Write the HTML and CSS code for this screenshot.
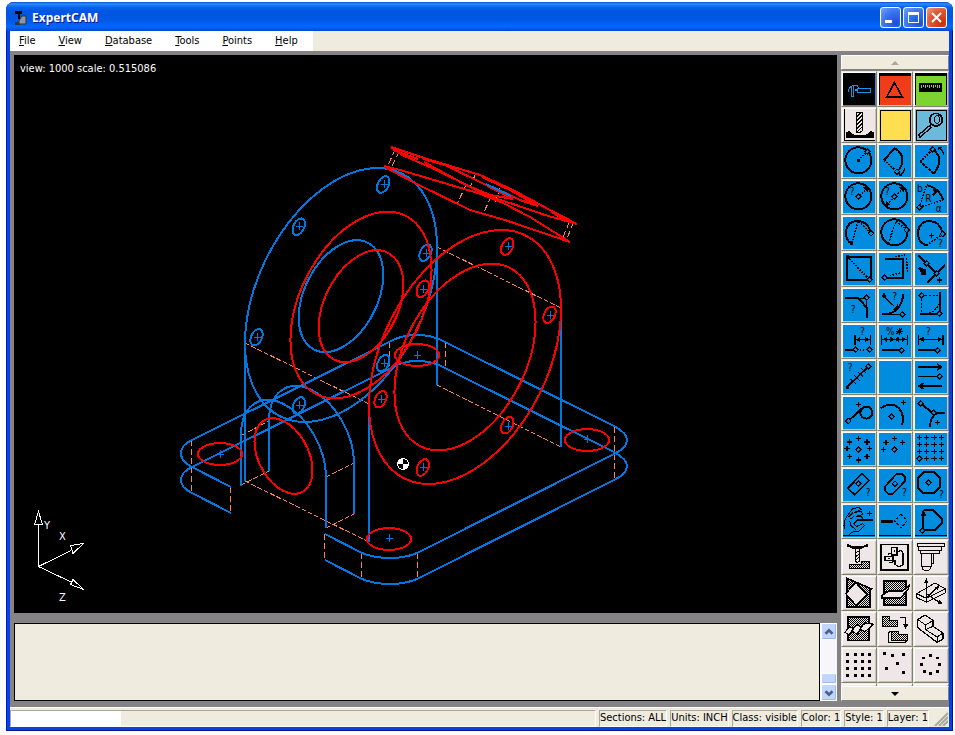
FILE: index.html
```html
<!DOCTYPE html>
<html lang="en">
<head>
    <meta charset="UTF-8">
    <meta name="viewport" content="width=device-width, initial-scale=1.0">
    <title>ExpertCAM</title>
    <link rel="stylesheet" href="styles.css">
</head>
<body>
    <!-- shared icon parts -->
    <svg class="defs" aria-hidden="true">
        <defs>
            <path id="dm" d="M0-8L8 0L0 8L-8 0Z" fill="#008de0" stroke="#000" stroke-width="4"/>
            <path id="pl" d="M-8 0H8M0-8V8" stroke="#000" stroke-width="4"/>
            <path id="cross" d="M-3 .5H4M.5-4V4"/>
            <pattern id="hatch" width="6" height="6" patternUnits="userSpaceOnUse">
                <rect width="6" height="6" fill="#efe7e7"/>
                <path d="M0 0H3V3H0ZM3 3H6V6H3Z" fill="#000"/>
            </pattern>
        </defs>
    </svg>
    <div class="window">
        <div class="titlebar">
            <svg class="app-icon" viewBox="0 0 16 16">
                <path d="M1 1H8V4H6V9H4V4H1Z" fill="#000"/>
                <path d="M1 12H6V15H1Z" fill="#333"/>
                <path d="M6 9L8 6H12V14H5V11Z" fill="#8c96a5" stroke="#333" stroke-width="1"/>
            </svg>
            <h1>ExpertCAM</h1>
            <button class="win-button" aria-label="Minimize"><svg viewBox="0 0 19 19"><path d="M4 13.5H11" stroke-width="3"/></svg></button>
            <button class="win-button" aria-label="Maximize"><svg viewBox="0 0 19 19"><path d="M4 5.5H15" stroke-width="3"/><path d="M4.5 5V14.500H14.5V5" stroke-width="1"/></svg></button>
            <button class="win-button close" aria-label="Close"><svg viewBox="0 0 19 19"><path d="M5 5L14 14M14 5L5 14" stroke-width="2"/></svg></button>
        </div>
        <div class="menubar">
            <div class="menu">
                <button><u>F</u>ile</button>
                <button><u>V</u>iew</button>
                <button><u>D</u>atabase</button>
                <button><u>T</u>ools</button>
                <button><u>P</u>oints</button>
                <button><u>H</u>elp</button>
            </div>
        </div>
        <div class="client">
            <div class="work">
                <div class="viewport">
                    <svg viewBox="14 55 823 558" preserveAspectRatio="xMinYMin meet">
                        <text x="20" y="72" class="view-label">view: 1000 scale: 0.515086</text>
                        <!-- construction edges -->
                        <g class="dash">
                            <path d="M245 343L369 404M245 481L369 542M437 247L561 308M437 385L561 447"/>
                            <path d="M242 435L269 421M241 485L269 471M326 477L354 463M326 528L354 514"/>
                        </g>
                        <g class="dash long">
                            <path d="M191.5 440V493M230.5 487V513M324.5 534V560M361.5 553V579M417.5 553V579M614.5 427V479M389.5 342V368M445.5 342V368"/>
                            <path d="M395 150L388 165M399 152L392 166M466 185L457 204M475 175L470 188M491 197L483 214M500 188L495 203M569 223L563 237M573 223L567 239"/>
                        </g>
                        <!-- base plate -->
                        <g class="blue">
                            <path d="M231 487L190 466Q181 461 181 453Q181 445 192 440L389 342Q401 335 417 335Q433 335 445 342L614 426Q627 433 627 440Q627 448 614 454L417 553Q405 558 390 558Q374 558 362 553L325 534"/>
                            <path d="M231 513L192 493Q181 488 181 480Q181 472 192 467L389 369Q402 361 417 361Q433 361 445 368L614 452Q627 459 627 466Q627 474 614 480L417 579Q405 584 390 584Q374 584 362 579L325 560"/>
                            <path d="M245 343V481M369 404V542M437 240V385M561 308V447"/>
                            <path d="M241 435V486M269 420V471M326 477V528M354 462V514"/>
                            <path transform="matrix(.425 .21 0 .52 283.5 456)" d="M-100 0A100 100 0 0 1 100 0"/>
                            <path transform="matrix(.425 .21 0 .52 311.5 442)" d="M-100 0A100 100 0 0 1 100 0"/>
                        </g>
                        <!-- rear flange -->
                        <g class="blue" transform="matrix(.96 -.48 0 1.176 341 295)">
                            <circle r="100"/>
                            <circle cy="1" r="44"/>
                            <circle cx="88" r="6.5"/>
                            <circle cx="44" cy="-76" r="6.5"/>
                            <circle cx="-44" cy="-76" r="6.5"/>
                            <circle cx="-88" r="6.5"/>
                            <circle cx="-44" cy="76" r="6.5"/>
                            <circle cx="44" cy="76" r="6.5"/>
                        </g>
                        <g class="red" transform="matrix(.96 -.48 0 1.176 361 305)">
                            <circle r="73.5"/>
                            <circle cy="1" r="44"/>
                        </g>
                        <!-- front flange -->
                        <g class="red" transform="matrix(.96 -.48 0 1.176 465 357)">
                            <circle r="100"/>
                            <circle r="73.5"/>
                            <circle cx="88" r="6.5"/>
                            <circle cx="44" cy="-76" r="6.5"/>
                            <circle cx="-44" cy="-76" r="6.5"/>
                            <circle cx="-88" r="6.5"/>
                            <circle cx="-44" cy="76" r="6.5"/>
                            <circle cx="44" cy="76" r="6.5"/>
                        </g>
                        <g class="red">
                            <circle transform="matrix(.29 .144 0 .35 283.5 456)" r="100"/>
                            <ellipse cx="220" cy="454" rx="22" ry="11"/>
                            <ellipse cx="417" cy="355" rx="22" ry="11"/>
                            <ellipse cx="587" cy="440" rx="22" ry="11"/>
                            <ellipse cx="389" cy="539" rx="22" ry="11"/>
                        </g>
                        <!-- tilted disc -->
                        <g class="red">
                            <path d="M391 147L424 158L480 175L513 190L550 210L577 224L545 215L513 204L488 196L465 184L432 168L402 155Z"/>
                            <path d="M423 159L445 165L478 181L513 199L490 195L466 185L424 162"/>
                            <path d="M482 177L510 190L538 206L520 200L497 189"/>
                            <path d="M393 150L418 159M551 212L568 221"/>
                            <path d="M384 166L400 170L478 193L503 203L530 217L570 242L505 220L470 210L419 185L390 170Z"/>
                        </g>
                        <path class="blue" d="M486 184L511 196"/>
                        <g class="centers">
                            <use href="#cross" x="384" y="184"/><use href="#cross" x="299" y="226"/><use href="#cross" x="257" y="337"/>
                            <use href="#cross" x="299" y="405"/><use href="#cross" x="384" y="363"/><use href="#cross" x="426" y="253"/>
                            <use href="#cross" x="508" y="246"/><use href="#cross" x="423" y="289"/><use href="#cross" x="381" y="399"/>
                            <use href="#cross" x="423" y="467"/><use href="#cross" x="508" y="426"/><use href="#cross" x="550" y="315"/>
                            <use href="#cross" x="220" y="454"/><use href="#cross" x="417" y="355"/><use href="#cross" x="587" y="439"/><use href="#cross" x="389" y="538"/>
                        </g>
                        <!-- origin marker -->
                        <circle cx="403" cy="464" r="6" fill="#fff"/>
                        <path d="M403 464V459A5 5 0 0 1 408 464ZM403 464V469A5 5 0 0 1 398 464Z" fill="#000"/>
                        <!-- axes -->
                        <g class="axes">
                            <path d="M38.5 524V566.500L71 550.500M38.5 566.500L71 582"/>
                            <path d="M34.5 524.500H42.5L38.5 511.500ZM70.5 545.500L83.5 543.500L73 553.500ZM73 579.500L83.5 589.500L70.5 584.500Z"/>
                        </g>
                        <g class="axis-names">
                            <text x="44" y="529">Y</text>
                            <text x="59" y="540">X</text>
                            <text x="59" y="601">Z</text>
                        </g>
                    </svg>
                </div>
                <div class="console">
                    <textarea aria-label="Messages" readonly></textarea>
                    <div class="scrollbar">
                        <button aria-label="Scroll up"><svg viewBox="0 0 16 16"><path d="M4 10L8 6L12 10"/></svg></button>
                        <div class="track"><div class="thumb"></div></div>
                        <button aria-label="Scroll down"><svg viewBox="0 0 16 16"><path d="M4 6L8 10L12 6"/></svg></button>
                    </div>
                </div>
            </div>
            <div class="toolbar">
                <button class="pager" aria-label="Previous tools"><svg viewBox="0 0 8 4"><path d="M0 4L4 0L8 4Z" fill="#aca899"/></svg></button>
                <div class="tools">
                    <button class="black"><svg viewBox="0 0 99 99"><path d="M18 56L17 49L24 40L32 37H42L46 44M31 37V69H24V42M36 48H44V45H82V57H44V53H36" stroke="#1a94e6" stroke-width="3"/><path d="M97 0V97H0" stroke="#1a94e6" stroke-width="3"/></svg></button>
                    <button class="black"><svg viewBox="0 0 99 99"><path d="M3 8H95V96H3Z" fill="#f03c18" stroke="none"/><path d="M46 29L70 72H23Z" stroke-width="5"/></svg></button>
                    <button class="black"><svg viewBox="0 0 99 99"><path d="M3 8H92V99H3Z" fill="#7bd42f" stroke="none"/><path d="M12 29H81V58H12Z" class="solid"/><path d="M19 35V46M25 35V42M31 35V46M37 35V42M43 35V46M49 35V42M55 35V46M61 35V42M67 35V46M73 35V46" stroke="#7bd42f" stroke-width="3"/></svg></button>

                    <button class="pale"><svg viewBox="0 0 99 99"><path class="thin" d="M5 0V94H96"/><path class="thin" d="M39 9H57V66L50 71H39ZM39 25L54 10M39 37L57 19M39 49L57 31M39 61L57 43M41 70L57 55"/><path class="solid" d="M10 69L20 66Q24 76 36 77H66Q78 76 82 66L92 69V86H10Z"/></svg></button>
                    <button class="yellow"><svg viewBox="0 0 99 99"><path class="thin" d="M4 3H94V94H4Z"/></svg></button>
                    <button class="sky"><svg viewBox="0 0 99 99"><path class="thin" d="M4 3H94V94H4Z"/><circle cx="63" cy="32" r="19" stroke-width="5"/><ellipse class="thin" cx="66" cy="31" rx="7" ry="12"/><path d="M49 45L42 51M42 51L11 78L15 85L48 56Z" stroke-width="4"/></svg></button>

                    <button><svg viewBox="0 0 99 99"><circle cx="46" cy="46" r="39"/><path class="dot" d="M46 46L73 20"/><circle class="solid" cx="46" cy="46" r="5"/><use href="#dm" x="73" y="20"/></svg></button>
                    <button><svg viewBox="0 0 99 99"><path d="M15 45L47 10Q70 22 70 45Q70 65 56 78"/><path class="dot" d="M15 45L54 80"/><use href="#dm" x="54" y="80"/><path d="M63 91Q76 82 77 69M62 84V92H70" stroke-width="4"/></svg></button>
                    <button><svg viewBox="0 0 99 99"><path d="M53 13Q74 28 73 47Q72 68 56 85"/><path d="M56 85L16 50" stroke-dasharray="9 3"/><path class="dot" d="M16 50L53 13"/><use href="#dm" x="53" y="13"/><path d="M72 9Q84 14 86 29M70 14L72 7H80" stroke-width="4"/></svg></button>

                    <button><svg viewBox="0 0 99 99"><circle cx="46" cy="46" r="39"/><text x="20" y="43">?</text><path class="dot" d="M50 44L70 24"/><path class="solid" d="M74 18V33L60 19Z"/><use href="#dm" x="46" y="47"/></svg></button>
                    <button><svg viewBox="0 0 99 99"><circle cx="46" cy="46" r="39"/><text x="18" y="43">?</text><path class="dot" d="M24 70L70 24"/><path class="solid" d="M74 18V33L60 19ZM20 74V59L34 73Z"/><use href="#dm" x="46" y="47"/></svg></button>
                    <button><svg viewBox="0 0 99 99"><path d="M35 12Q72 20 85 57"/><path class="dot" d="M13 79L35 12M13 79L85 57"/><path class="solid" d="M66 24V38L52 26Z"/><path d="M52 43L61 34"/><text x="6" y="32">b</text><text x="31" y="64">R</text><text x="62" y="93">α</text><use href="#dm" x="13" y="79"/></svg></button>

                    <button><svg viewBox="0 0 99 99"><path d="M26 79C12 74 7 56 9 42C12 23 26 12 46 12C64 12 76 22 84 46"/><path class="dot" d="M26 79L46 12L84 49"/><path class="solid" d="M21 72H31V84H21Z"/><use href="#dm" x="84" y="49"/></svg></button>
                    <button><svg viewBox="0 0 99 99"><circle cx="46" cy="46" r="39"/><path class="dot" d="M28 79L51 12L83 39"/><use href="#dm" x="83" y="39"/></svg></button>
                    <button><svg viewBox="0 0 99 99"><path d="M35 85C12 78 7 58 9 42C12 23 26 11 45 12C64 13 76 24 83 46"/><path class="dot" d="M35 85L83 51"/><use href="#dm" x="83" y="51"/><use href="#pl" x="49" y="56"/><text x="69" y="90">?</text></svg></button>

                    <button><svg viewBox="0 0 99 99"><path d="M12 11H83V81H12Z"/><path class="dot" d="M12 11L80 80"/><path class="solid" d="M8 7H18V17H8Z"/><use href="#dm" x="80" y="80"/></svg></button>
                    <button><svg viewBox="0 0 99 99"><path d="M18 18H72V74H20"/><path class="dot" d="M48 11L78 6M82 16L86 60M32 68L66 60" stroke-dasharray="8 6"/><use href="#dm" x="17" y="74"/></svg></button>
                    <button><svg viewBox="0 0 99 99"><path d="M10 7L65 61M37 88L90 36"/><path class="solid" d="M12 40L22 45L30 50L34 46V67H15L20 60L10 48Z"/><use href="#dm" x="35" y="31"/><use href="#dm" x="65" y="61"/><use href="#pl" x="73" y="81"/></svg></button>

                    <button><svg viewBox="0 0 99 99"><path d="M6 27H46L71 56V88"/><path class="thin" d="M46 27H71V56"/><use href="#dm" x="71" y="26"/><text x="23" y="73">?</text></svg></button>
                    <button><svg viewBox="0 0 99 99"><path d="M10 75Q66 78 73 14"/><path class="thin" d="M10 75H70"/><path d="M17 24L46 52" stroke-width="4"/><path class="solid" d="M58 63H40L56 46Z"/><path d="M8 20H22M15 13V27" stroke-width="5"/><text x="40" y="34">?</text><use href="#dm" x="70" y="76"/></svg></button>
                    <button><svg viewBox="0 0 99 99"><path d="M75 10V75H15"/><path class="thin" d="M20 19V72M20 19H75" stroke-dasharray="6 5"/><path class="dot" d="M35 75Q68 66 75 36"/><use href="#dm" x="20" y="19"/><use href="#dm" x="73" y="74"/></svg></button>

                    <button><svg viewBox="0 0 99 99"><text x="51" y="31">?</text><path d="M36 30V59M82 30V59" stroke-width="4"/><path class="thin" d="M36 44H82"/><path class="solid" d="M38 44L52 36V52ZM80 44L66 36V52Z"/><path d="M6 74H32"/><path class="dot" d="M50 74H70"/><use href="#dm" x="38" y="74"/><use href="#dm" x="80" y="74"/></svg></button>
                    <button><svg viewBox="0 0 99 99"><text x="21" y="31">%</text><path d="M50 19H72M61 8V30M53 11L69 27M69 11L53 27" stroke-width="3"/><path d="M8 30V60M85 30V60" stroke-width="4"/><path class="thin" d="M8 43H85"/><path class="solid" d="M11 43L25 35V51ZM82 43L68 35V51ZM46 43L34 35V51ZM47 43L59 35V51Z"/><path d="M10 76H62"/><use href="#dm" x="68" y="76"/></svg></button>
                    <button><svg viewBox="0 0 99 99"><text x="33" y="31">?</text><path d="M10 30V60M84 30V60" stroke-width="4"/><path class="thin" d="M10 43H84"/><path class="solid" d="M12 43L26 35V51ZM82 43L68 35V51Z"/><path d="M10 76H62"/><use href="#dm" x="68" y="76"/></svg></button>

                    <button><svg viewBox="0 0 99 99"><path d="M12 79L72 20"/><path class="thin" d="M22 54L39 69M33 43L50 58M44 32L61 47M55 22L70 37"/><path class="solid" d="M8 75H18V84H8Z"/><use href="#dm" x="76" y="16"/><text x="14" y="29">?</text></svg></button>
                    <button aria-label="Blank"><svg viewBox="0 0 99 99"></svg></button>
                    <button><svg viewBox="0 0 99 99"><path d="M10 18H78M66 9L79 18L66 27M10 46H68M82 75H13M25 66L12 75L25 84" stroke-width="5"/><use href="#dm" x="74" y="46"/></svg></button>

                    <button><svg viewBox="0 0 99 99"><path d="M18 70L55 36"/><circle cx="70" cy="47" r="18"/><use href="#dm" x="16" y="72"/><use href="#pl" x="46" y="22"/></svg></button>
                    <button><svg viewBox="0 0 99 99"><path d="M6 34Q22 20 45 24Q78 38 70 83"/><use href="#dm" x="38" y="59"/><use href="#pl" x="73" y="16"/></svg></button>
                    <button><svg viewBox="0 0 99 99"><path d="M17 19L55 50M90 48H66Q46 58 45 90"/><use href="#dm" x="17" y="19"/><use href="#dm" x="56" y="47"/><use href="#pl" x="67" y="76"/></svg></button>

                    <button><svg viewBox="0 0 99 99"><use href="#dm" x="46" y="50"/><use href="#pl" x="46" y="16"/><use href="#pl" x="20" y="27"/><use href="#pl" x="72" y="27"/><use href="#pl" x="12" y="47"/><use href="#pl" x="80" y="47"/><use href="#pl" x="20" y="70"/><use href="#pl" x="72" y="70"/><use href="#pl" x="46" y="81"/></svg></button>
                    <button><svg viewBox="0 0 99 99"><use href="#dm" x="46" y="50"/><use href="#pl" x="46" y="17"/><use href="#pl" x="21" y="28"/><use href="#pl" x="71" y="28"/><use href="#pl" x="13" y="50"/></svg></button>
                    <button><svg viewBox="0 0 99 99"><path d="M5 14H21M27 14H43M49 14H65M71 14H87M5 35H21M27 35H43M49 35H65M71 35H87M5 56H21M27 56H43M49 56H65M71 56H87M27 77H43M49 77H65M71 77H87M13 6V22M35 6V22M57 6V22M79 6V22M13 27V43M35 27V43M57 27V43M79 27V43M13 48V64M35 48V64M57 48V64M79 48V64M35 69V85M57 69V85M79 69V85" stroke-width="3"/><use href="#dm" x="13" y="77"/></svg></button>

                    <button><svg viewBox="0 0 99 99"><path d="M57 14L78 34L35 77L14 58Z" stroke-width="5"/><use href="#dm" x="46" y="44"/><text x="68" y="81">?</text></svg></button>
                    <button><svg viewBox="0 0 99 99"><path d="M54 14H68L78 24V36L42 74H28L18 64V52Z" stroke-width="5"/><use href="#dm" x="48" y="44"/><text x="69" y="81">?</text></svg></button>
                    <button><svg viewBox="0 0 99 99"><path d="M26 9H56L74 26V56L56 73H26L9 56V26Z"/><use href="#dm" x="41" y="41"/><text x="72" y="87">?</text></svg></button>

                    <button><svg viewBox="0 0 99 99"><path d="M41 45H90" stroke-width="5"/><path class="thin" d="M4 72Q0 50 12 34L28 12L48 7L54 14L34 22L56 19L58 29L38 34L56 33L58 42L44 44M16 36L30 22M22 42L34 34M41 47L32 56L41 64L60 56L64 62L48 78L26 82L17 91M20 48L24 62L38 74"/><use href="#pl" x="80" y="26"/><path class="thin" d="M0 92H96"/></svg></button>
                    <button><svg viewBox="0 0 99 99"><path d="M6 48H42" stroke-width="9"/><path d="M65 28L84 48L65 68L46 48Z" stroke-width="4" stroke-dasharray="8 5"/><path class="thin" d="M0 92H96"/></svg></button>
                    <button><svg viewBox="0 0 99 99"><path d="M27 16H56L80 40V56L59 76H30M25 70V24"/><path class="solid" d="M25 14L34 34H16Z"/><use href="#dm" x="22" y="77"/><path class="thin" d="M0 92H96"/></svg></button>

                    <button class="pale"><svg viewBox="0 0 99 99"><path d="M15 8V14L24 17H62L72 14V8"/><path d="M28 22H58" stroke-width="5"/><path class="thin" d="M36 25V60L42 64L50 60V25M36 38L50 28M36 48L50 38M36 58L50 48"/><path class="hatch thin" d="M18 70H54V60H80V83H18Z"/></svg></button>
                    <button class="pale"><svg viewBox="0 0 99 99"><path d="M6 10H86V86H6Z" stroke-width="5"/><path d="M38 20H54V42H38ZM18 46H42V58H18ZM54 32L68 28L72 36V72L60 78L48 70V60L32 66M26 40L38 36" stroke-width="4"/><path class="solid" d="M44 28H49V34H44ZM26 50H32V55H26Z"/></svg></button>
                    <button class="pale"><svg viewBox="0 0 99 99"><path class="thin" d="M6 6H89V17H6ZM10 17V27H78V17M80 17V27H72V37H16V27M18 37V76H48V37M48 37V68H54V37M22 76V84L28 88H40L46 84V76"/></svg></button>

                    <button class="pale"><svg viewBox="0 0 99 99"><path class="hatch" d="M12 4L86 36L80 42V90H12Z" stroke-width="5"/><path d="M38 17L72 52L40 86L8 50Z" fill="#efe7e7" stroke-width="4"/></svg></button>
                    <button class="pale"><svg viewBox="0 0 99 99"><path class="hatch" d="M14 12H80V83H14Z" stroke-width="5"/><path d="M28 42H70L90 26L88 36L66 62H8V56Z" fill="#efe7e7" stroke-width="5"/></svg></button>
                    <button class="pale"><svg viewBox="0 0 99 99"><path class="thin" d="M5 50L60 18L90 35V48L35 76L5 62ZM5 50L34 64L90 36M34 64V76"/><path d="M34 64V12M34 50L76 78M34 64L66 32" stroke-width="4"/><path class="solid" d="M34 3L41 18H27ZM84 82L66 79L74 68ZM74 25L68 40L60 32Z"/></svg></button>

                    <button class="pale"><svg viewBox="0 0 99 99"><path class="hatch" d="M14 12H78V82H14Z" stroke-width="5"/><path d="M6 58L20 40L30 46L42 34L52 42L68 30L92 34L66 56L54 50L42 64L30 56L18 66Z" fill="#efe7e7" stroke-width="4"/><path class="thin" d="M20 62L34 44M44 60L58 40"/></svg></button>
                    <button class="pale"><svg viewBox="0 0 99 99"><path class="hatch thin" d="M10 10H30V22H56V40H10Z"/><path class="hatch thin" d="M36 54H58V64H84V82H36Z"/><path class="thin" d="M36 54L28 60V88H78L84 82"/><path d="M64 14H80V38" stroke-width="4"/><path class="solid" d="M80 48L71 32H89Z"/></svg></button>
                    <button class="pale"><svg viewBox="0 0 99 99"><path d="M8 20L30 6L54 22V40L84 60V78L66 88L8 44Z" stroke-width="4"/><path class="thin" d="M8 20L32 36V50L66 72V88M32 36L54 22M32 50L54 40M66 72L84 60"/></svg></button>

                    <button class="pale"><svg viewBox="0 0 99 99"><path class="spots" d="M14 17h1M36 17h1M58 17h1M79 17h1M14 38h1M36 38h1M58 38h1M79 38h1M14 59h1M36 59h1M58 59h1M79 59h1M14 80h1M36 80h1M58 80h1M79 80h1"/></svg></button>
                    <button class="pale"><svg viewBox="0 0 99 99"><path class="spots" d="M16 14h1M40 20h1M74 17h1M55 43h1M23 59h1M74 71h1"/></svg></button>
                    <button class="pale"><svg viewBox="0 0 99 99"><path class="spots" d="M46 19h1M25 27h1M67 27h1M20 47h1M73 47h1M27 67h1M67 67h1M46 74h1"/></svg></button>

                    <button class="pale"><svg viewBox="0 0 99 99"><path d="M18 6H26M58 6H66M38 10L44 4" stroke-width="4"/></svg></button>
                    <button class="pale"><svg viewBox="0 0 99 99"><path d="M24 6H34M54 4L66 12" stroke-width="4"/></svg></button>
                    <button class="pale" aria-label="Blank"><svg viewBox="0 0 99 99"></svg></button>
                </div>
                <button class="pager" aria-label="More tools"><svg viewBox="0 0 8 4"><path d="M0 0H8L4 4Z"/></svg></button>
            </div>
        </div>
        <div class="statusbar">
            <div class="panel prompt"><input type="text" aria-label="Command"></div>
            <div class="panel">Sections: ALL</div>
            <div class="panel">Units: INCH</div>
            <div class="panel">Class: visible</div>
            <div class="panel">Color: 1</div>
            <div class="panel">Style: 1</div>
            <div class="panel">Layer: 1</div>
            <svg class="grip" viewBox="0 0 14 14"><path d="M1 14L14 1M5 14L14 5M9 14L14 9"/></svg>
        </div>
    </div>
</body>
</html>
```
FILE: styles.css
```css
* {
    box-sizing: border-box;
}
body {
    margin: 0;
    padding: 2px 2px 4px 6px;
    height: 100vh;
    background-color: #fff;
    font-family: Tahoma, "DejaVu Sans Condensed", "Noto Sans", sans-serif;
    font-size: 11px;
    line-height: 14px;
    color: #000;
}
button {
    margin: 0;
    padding: 0;
    border: 0;
    background: none;
    font: inherit;
    color: inherit;
}
svg {
    display: block;
}
.defs {
    position: absolute;
    width: 0;
    height: 0;
}
.window {
    height: 100%;
    display: flex;
    flex-direction: column;
    padding: 0 4px 4px;
    background-color: #0842e0;
    box-shadow: inset 1px 0 #0019cf, inset -1px -1px #00138c;
    border-radius: 8px 8px 0 0;
    overflow: hidden;
}

/* title bar */
.titlebar {
    display: flex;
    align-items: center;
    gap: 2px;
    height: 29px;
    flex: none;
    margin: 0 -4px;
    padding: 2px 6px 0 8px;
    background: linear-gradient(#0a50d0 0, #2a8cff 2px, #0a62ee 5px, #0055e0 10px, #0058e8 18px, #0068ff 25px, #0048c8 29px);
}
.app-icon {
    width: 16px;
    height: 16px;
}
.titlebar h1 {
    flex: 1;
    margin: 0;
    font-family: "Trebuchet MS", "Noto Sans", sans-serif;
    font-size: 12px;
    line-height: 16px;
    color: #fff;
    text-shadow: 1px 1px #0a1883;
}
.win-button {
    width: 21px;
    height: 21px;
    border: 1px solid #fff;
    border-radius: 3px;
    background: radial-gradient(circle at 80% 80%, #1c50d8, #3c78f0 60%, #7aa4f8);
}
.win-button.close {
    background: radial-gradient(circle at 80% 80%, #c83008, #e05a38 60%, #f09c84);
}
.win-button svg {
    width: 19px;
    height: 19px;
    fill: none;
    stroke: #fff;
}

/* menu */
.menubar {
    display: flex;
    flex: none;
    height: 20px;
    background-color: #efebde;
}
.menu {
    display: flex;
    background-color: #fff;
    padding-right: 1px;
}
.menu button {
    padding: 0 14px 0 9px;
}

/* client area */
.client {
    display: flex;
    flex: 1;
    min-height: 0;
    gap: 4px;
    padding: 4px 0 6px 4px;
    background-color: #848284;
}
.work {
    display: flex;
    flex-direction: column;
    flex: 1;
    min-width: 0;
    gap: 10px;
}
.viewport {
    flex: 1;
    min-height: 0;
    background-color: #000;
}
.viewport svg {
    width: 100%;
    height: 100%;
    fill: none;
    shape-rendering: crispEdges;
}
.viewport circle,
.viewport path {
    vector-effect: non-scaling-stroke;
}
.view-label,
.axis-names text {
    fill: #fff;
    stroke: none;
    font-size: 11px;
}
.blue {
    stroke: #0078e0;
    stroke-width: 2px;
}
.red {
    stroke: #ff0000;
    stroke-width: 2px;
}
.dash {
    stroke: #f88460;
    stroke-width: 1px;
    stroke-dasharray: 5 2;
}
.dash.long {
    stroke-dasharray: 6 3;
}
.centers {
    stroke: #0078e0;
    stroke-width: 1px;
}
.axes {
    stroke: #fff;
    stroke-width: 1px;
}

/* message area */
.console {
    display: flex;
    flex: none;
    height: 78px;
}
.console textarea {
    flex: 1;
    min-width: 0;
    border: 1px solid #000;
    background-color: #efebde;
    font: inherit;
    resize: none;
    overflow: hidden;
    outline: none;
}
.scrollbar {
    display: flex;
    flex-direction: column;
    width: 17px;
    background-color: #f8f6fa;
    border-left: 1px solid #fff;
}
.scrollbar button {
    height: 17px;
    border: 1px solid #fff;
    border-radius: 2px;
    background-color: #c2d5fc;
    box-shadow: inset -1px -1px #9cb8f0;
}
.scrollbar svg {
    width: 14px;
    height: 14px;
    fill: none;
    stroke: #4d6185;
    stroke-width: 3;
}
.track {
    flex: 1;
    display: flex;
    flex-direction: column;
    justify-content: flex-end;
}
.thumb {
    height: 11px;
    border: 1px solid #fff;
    border-radius: 2px;
    background-color: #c2d5fc;
    box-shadow: inset -1px -1px #9cb8f0;
}

/* tool palette */
.toolbar {
    display: flex;
    flex-direction: column;
    width: 108px;
    background-color: #848284;
}
.pager {
    display: flex;
    flex: none;
    align-items: center;
    justify-content: center;
    height: 15px;
    background-color: #efebde;
    border: 1px solid;
    border-color: #fff #848270 #848270 #fff;
}
.pager svg {
    width: 8px;
    height: 4px;
}
.tools {
    display: grid;
    grid-template-columns: repeat(3, 36px);
    grid-auto-rows: 36px;
    align-content: start;
    flex: 1;
    min-height: 0;
    padding-top: 1px;
    overflow: hidden;
}
.tools button {
    border: 1px solid;
    border-color: #efebde #848270 #848270 #efebde;
    box-shadow: inset 1px 1px #fff, inset -1px -1px #c8c4b4;
    padding: 1px 0 0 1px;
    background-color: #008de0;
}
.tools button.black {
    background-color: #000;
}
.tools button.pale {
    background-color: #efe7e7;
}
.tools button.yellow {
    background-color: #ffde52;
}
.tools button.sky {
    background-color: #6bb9db;
}
.tools svg {
    width: 33px;
    height: 33px;
    fill: none;
    stroke: #000;
    stroke-width: 6;
    shape-rendering: crispEdges;
}
.tools text {
    fill: #000;
    stroke: none;
    font-size: 30px;
}
.tools .thin {
    stroke-width: 3;
}
.tools .dot {
    stroke-width: 5;
    stroke-dasharray: 5 4;
}
.tools .solid {
    fill: #000;
    stroke: none;
}
.tools .hatch {
    fill: url(#hatch);
}
.tools .spots {
    stroke-width: 8;
    stroke-linecap: square;
}

/* status bar */
.statusbar {
    display: flex;
    flex: none;
    gap: 3px;
    height: 20px;
    padding-top: 2px;
    background-color: #efebde;
    border-top: 1px solid #fff;
}
.panel {
    border: 1px solid;
    border-color: #aca899 #fff #fff #aca899;
    white-space: nowrap;
}
.prompt {
    flex: 1;
}
.prompt input {
    display: block;
    width: 110px;
    height: 15px;
    padding: 0;
    border: 0;
    background-color: #fff;
    font: inherit;
    outline: none;
}
.grip {
    width: 14px;
    height: 14px;
    margin: 2px 1px 0 2px;
    stroke: #aca899;
    stroke-width: 2;
}
```
